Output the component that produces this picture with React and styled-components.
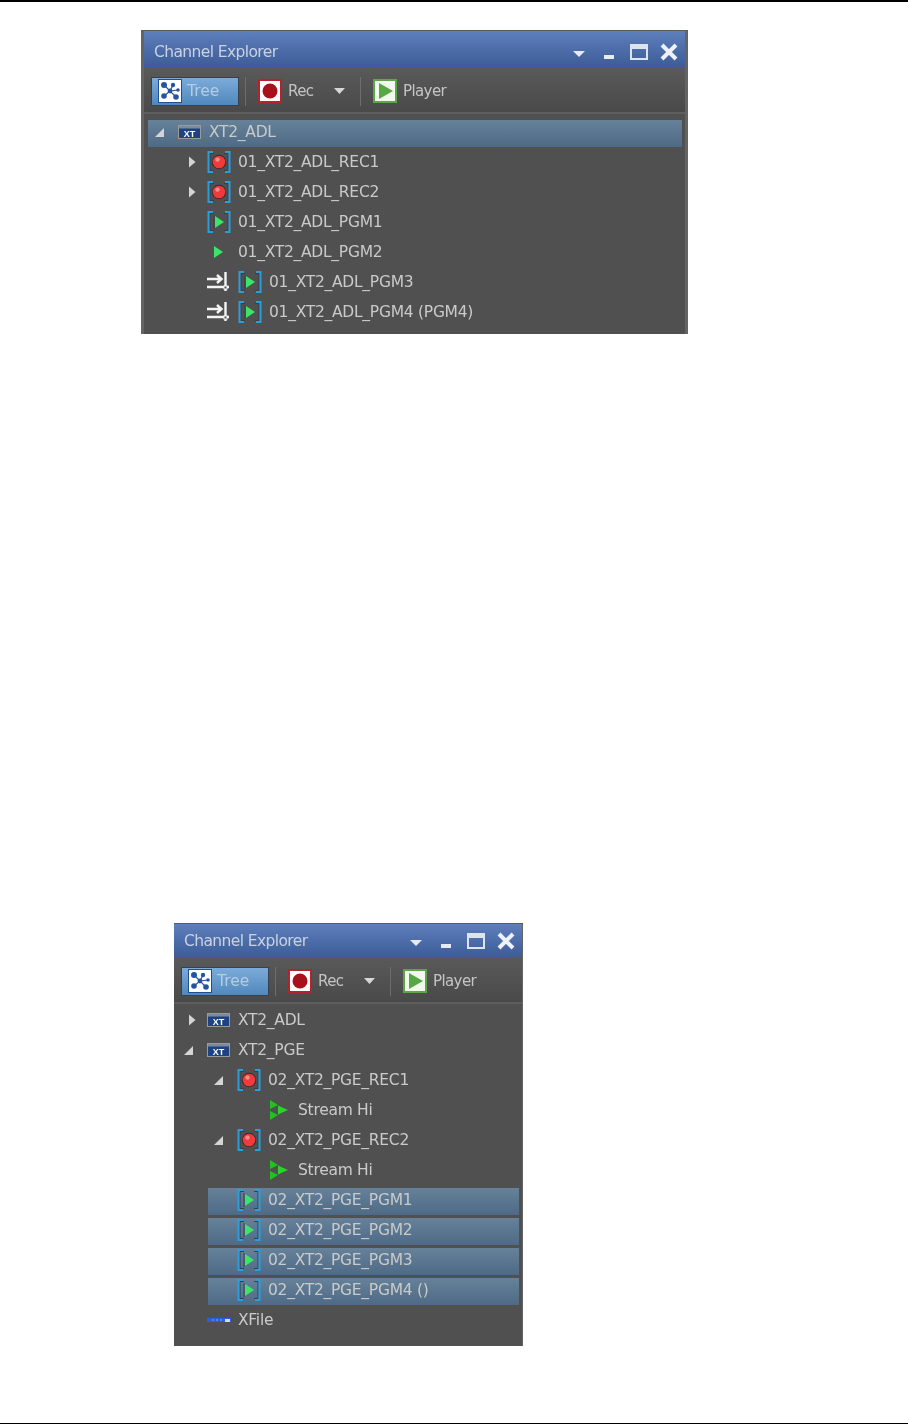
import React from "react";
import styled, { createGlobalStyle } from "styled-components";

const UI_FONT = `"DejaVu Sans", "Liberation Sans", sans-serif`;

const Global = createGlobalStyle`
  html, body { margin: 0; padding: 0; background: #fff; }
  body { font-family: ${UI_FONT}; }
`;

const Page = styled.div`
  display: flex;
  flex-direction: column;
  align-items: flex-start;
  min-height: 100vh;
  box-sizing: border-box;
  border-top: 2px solid #000;
  border-bottom: 1px solid #000;
`;

const Panel = styled.section`
  box-sizing: border-box;
  width: ${(p) => p.$width}px;
  margin: ${(p) => p.$top}px 0 0 ${(p) => p.$left}px;
  padding: 0 ${(p) => (p.$wide ? 3 : 1)}px 0 ${(p) => (p.$wide ? 3 : 0)}px;
  background: #646464;
  border-top: 1px solid #5c5c5c;
  filter: blur(0.45px);
`;

const TitleBar = styled.header`
  display: flex;
  align-items: center;
  justify-content: space-between;
  height: ${(p) => p.$height}px;
  padding: ${(p) => p.$pushDown}px 1px 0 10px;
  box-sizing: border-box;
  background: linear-gradient(#5d7fbc, #3d5c98);
`;

const Title = styled.h2`
  margin: 0;
  font-size: 15.5px;
  font-weight: 400;
  letter-spacing: -0.6px;
  color: #c9d2e2;
`;

const WindowButtons = styled.div`
  display: flex;
  align-items: center;
`;

const WindowButton = styled.svg`
  display: block;
  width: 30px;
  height: 18px;
`;

const Toolbar = styled.div`
  display: flex;
  align-items: center;
  height: 47px;
  padding: 3px 0 0 7px;
  box-sizing: border-box;
  background: linear-gradient(#5a5a5a, #494949);
  border-bottom: 2px solid #5e5e5e;
`;

const TreeButton = styled.button`
  display: flex;
  align-items: center;
  box-sizing: border-box;
  width: 88px;
  height: 29px;
  padding: 0 0 0 6px;
  gap: 5px;
  border: 1px solid #38424c;
  background: linear-gradient(#7cabd9, #5088bd);
  color: #b3cde4;
  font: 400 15.5px ${UI_FONT};
  letter-spacing: 0;
`;

const ToolDivider = styled.span`
  width: 1px;
  height: 29px;
  margin: 0 ${(p) => p.$after}px 0 ${(p) => p.$before}px;
  background: #6e6e6e;
`;

const ToolLabel = styled.span`
  margin-left: 6px;
  min-width: ${(p) => p.$min || 0}px;
  font-size: 15px;
  letter-spacing: -0.6px;
  color: #c4c4c4;
`;

const ToolCaret = styled.svg`
  display: block;
  width: 11px;
  height: 6px;
  margin-left: 19px;
`;

const Tree = styled.div`
  display: flex;
  flex-direction: column;
  gap: 3px;
  padding: ${(p) => p.$top}px 3px ${(p) => p.$bottom}px 0;
  background: #505050;
`;

const Row = styled.div`
  display: flex;
  align-items: center;
  height: 27px;
  margin-left: ${(p) => p.$indent}px;
  padding-left: ${(p) => p.$pad || 0}px;
  padding-bottom: 3px;
  box-sizing: border-box;
  background: ${(p) => (p.$selected ? "linear-gradient(#668199, #4e6a86)" : "none")};
`;

const ExpanderSlot = styled.span`
  display: flex;
  align-items: center;
  justify-content: center;
  flex: none;
  width: 30px;
  & > svg {
    margin-right: ${(p) => (p.$open ? 8 : 1)}px;
  }
`;

const IconSlot = styled.span`
  display: flex;
  align-items: center;
  flex: none;
  width: 31px;
`;

const Label = styled.span`
  font-size: 15.5px;
  letter-spacing: -0.27px;
  white-space: nowrap;
  color: #cacaca;
`;

const Collapsed = () => (
  <svg width="8" height="12" viewBox="0 0 8 12">
    <path d="M1 0.5 L7.5 6 L1 11.5 Z" fill="#d4d4d4" />
  </svg>
);

const Expanded = () => (
  <svg width="9" height="9" viewBox="0 0 9 9">
    <path d="M0 9 L9 9 L9 0 Z" fill="#d4d4d4" />
  </svg>
);

const XtIcon = () => (
  <svg width="23" height="14" viewBox="0 0 23 14">
    <rect x="0.5" y="0.5" width="22" height="13" fill="#1d4384" stroke="#9a9a9a" />
    <rect x="1" y="1" width="21" height="2.5" fill="#7c8aa0" />
    <text x="11.5" y="12" textAnchor="middle" fontFamily="Liberation Sans" fontWeight="700" fontSize="9" fill="#fff">
      XT
    </text>
  </svg>
);

const Brackets = ({ children }) => (
  <svg width="24" height="22" viewBox="0 0 24 22">
    <path d="M7 2.5 H3 V19.5 H7 M17 2.5 H21 V19.5 H17" fill="none" stroke="#3a3f44" strokeWidth="1" />
    <path d="M6 1 H1.5 V21 H6 M18 1 H22.5 V21 H18" fill="none" stroke="#2c9ddb" strokeWidth="2" />
    {children}
  </svg>
);

const RecordBall = () => (
  <>
    <circle cx="12" cy="11" r="7.2" fill="#33292a" />
    <circle cx="12" cy="11" r="6.3" fill="#f03a3c" />
    <circle cx="10.5" cy="8.6" r="2.2" fill="#ff8a8a" />
  </>
);

const PlayMark = () => <path d="M8 5 L17 11 L8 17 Z" fill="#3be56a" />;

const RecordIcon = () => (
  <Brackets>
    <RecordBall />
  </Brackets>
);

const ProgramIcon = () => (
  <Brackets>
    <path d="M7 4 V18" stroke="#3a3f44" strokeWidth="1" />
    <PlayMark />
  </Brackets>
);

const PlayIcon = () => (
  <svg width="24" height="22" viewBox="1 0 24 22">
    <PlayMark />
  </svg>
);

const PinIcon = () => (
  <svg width="24" height="20" viewBox="0 0 24 20">
    <path d="M0 7 H14 M10 3 L14.5 7 L10 11 M0 15 H22 M18.5 0 V19" fill="none" stroke="#f4f4f4" strokeWidth="2.4" />
    <rect x="17" y="14" width="3" height="3" fill="#505050" stroke="#f4f4f4" />
  </svg>
);

const StreamIcon = () => (
  <svg width="23" height="20" viewBox="-2 0 23 20">
    <path d="M1 0 L9 5 L1 9 Z M1 11 L9 15 L1 20 Z" fill="#1fc31f" />
    <path d="M9 5.5 L19 10 L9 14.5 Z" fill="#2bd42b" />
  </svg>
);

const FileIcon = () => (
  <svg width="24" height="6" viewBox="0 0 24 6">
    <rect x="0" y="1" width="24" height="4" fill="#2b5fe0" />
    <path d="M5 3 H7 M9 3 H11 M13 3 H15" stroke="#7fa3f2" strokeWidth="1" />
    <rect x="18" y="2" width="5" height="3" fill="#d8d8e4" />
  </svg>
);

const TreeGlyph = () => (
  <svg width="24" height="24" viewBox="0 0 24 24">
    <rect x="0.5" y="0.5" width="23" height="23" fill="#fff" stroke="#1f4e96" />
    <g fill="#23559f">
      <circle cx="6" cy="6" r="3" />
      <circle cx="15" cy="6" r="2.2" />
      <circle cx="6" cy="17" r="2.8" />
      <circle cx="12" cy="12" r="2.4" />
      <circle cx="18" cy="18" r="2.8" />
      <circle cx="20" cy="11" r="1.8" />
    </g>
    <path d="M6 6 L12 12 L15 6 M6 17 L12 12 L18 18 M12 12 L20 11" stroke="#23559f" strokeWidth="1.2" fill="none" />
  </svg>
);

const RecToolIcon = () => (
  <svg width="24" height="24" viewBox="0 0 24 24">
    <rect x="1" y="1" width="22" height="22" fill="#fff" stroke="#b4232c" strokeWidth="2" />
    <circle cx="12" cy="12" r="7.5" fill="#a8101c" />
  </svg>
);

const PlayerToolIcon = () => (
  <svg width="24" height="24" viewBox="0 0 24 24">
    <rect x="1" y="1" width="22" height="22" fill="#f3f8ee" stroke="#5ca548" strokeWidth="2" />
    <path d="M6 4 L20 12 L6 20 Z" fill="#56a844" />
  </svg>
);

const WindowControls = () => (
  <WindowButtons>
    <WindowButton viewBox="0 0 30 18">
      <path d="M9 8 H21 L15 14 Z" fill="#e6ebf4" />
    </WindowButton>
    <WindowButton viewBox="0 0 30 18">
      <rect x="10" y="12" width="10" height="4" fill="#e6ebf4" />
    </WindowButton>
    <WindowButton viewBox="0 0 30 18">
      <rect x="7" y="2" width="16" height="14" fill="none" stroke="#dde4f0" strokeWidth="2" />
      <rect x="7" y="2" width="16" height="4" fill="#dde4f0" />
    </WindowButton>
    <WindowButton viewBox="0 0 30 18">
      <path d="M8 2 L22 16 M22 2 L8 16" stroke="#eef1f7" strokeWidth="4" />
    </WindowButton>
  </WindowButtons>
);

const ToolStrip = () => (
  <Toolbar>
    <TreeButton>
      <TreeGlyph />
      Tree
    </TreeButton>
    <ToolDivider $before={6} $after={12} />
    <RecToolIcon />
    <ToolLabel $min={27}>Rec</ToolLabel>
    <ToolCaret viewBox="0 0 11 6">
      <path d="M0 0 H11 L5.5 6 Z" fill="#d6d6d6" />
    </ToolCaret>
    <ToolDivider $before={15} $after={12} />
    <PlayerToolIcon />
    <ToolLabel>Player</ToolLabel>
  </Toolbar>
);

const TreeRow = ({ indent, pad, selected, expander, icons, label }) => (
  <Row $indent={indent} $pad={pad} $selected={selected}>
    {expander && (
      <ExpanderSlot $open={expander === "open"}>{expander === "open" ? <Expanded /> : <Collapsed />}</ExpanderSlot>
    )}
    {icons.map((Icon, i) => (
      <IconSlot key={i}>
        <Icon />
      </IconSlot>
    ))}
    <Label>{label}</Label>
  </Row>
);

const adlRows = [
  { indent: 4, selected: true, expander: "open", icons: [XtIcon], label: "XT2_ADL" },
  { indent: 33, expander: "closed", icons: [RecordIcon], label: "01_XT2_ADL_REC1" },
  { indent: 33, expander: "closed", icons: [RecordIcon], label: "01_XT2_ADL_REC2" },
  { indent: 63, icons: [ProgramIcon], label: "01_XT2_ADL_PGM1" },
  { indent: 63, icons: [PlayIcon], label: "01_XT2_ADL_PGM2" },
  { indent: 63, icons: [PinIcon, ProgramIcon], label: "01_XT2_ADL_PGM3" },
  { indent: 63, icons: [PinIcon, ProgramIcon], label: "01_XT2_ADL_PGM4 (PGM4)" },
];

const pgeRows = [
  { indent: 3, expander: "closed", icons: [XtIcon], label: "XT2_ADL" },
  { indent: 3, expander: "open", icons: [XtIcon], label: "XT2_PGE" },
  { indent: 33, expander: "open", icons: [RecordIcon], label: "02_XT2_PGE_REC1" },
  { indent: 93, icons: [StreamIcon], label: "Stream Hi" },
  { indent: 33, expander: "open", icons: [RecordIcon], label: "02_XT2_PGE_REC2" },
  { indent: 93, icons: [StreamIcon], label: "Stream Hi" },
  { indent: 34, pad: 29, selected: true, icons: [ProgramIcon], label: "02_XT2_PGE_PGM1" },
  { indent: 34, pad: 29, selected: true, icons: [ProgramIcon], label: "02_XT2_PGE_PGM2" },
  { indent: 34, pad: 29, selected: true, icons: [ProgramIcon], label: "02_XT2_PGE_PGM3" },
  { indent: 34, pad: 29, selected: true, icons: [ProgramIcon], label: "02_XT2_PGE_PGM4 ()" },
  { indent: 33, icons: [FileIcon], label: "XFile" },
];

const ChannelExplorer = ({ left, top, width, wide, titleHeight, titlePush, treeTop, treeBottom, rows }) => (
  <Panel $left={left} $top={top} $width={width} $wide={wide}>
    <TitleBar $height={titleHeight} $pushDown={titlePush}>
      <Title>Channel Explorer</Title>
      <WindowControls />
    </TitleBar>
    <ToolStrip />
    <Tree $top={treeTop} $bottom={treeBottom}>
      {rows.map((row, i) => (
        <TreeRow key={i} {...row} />
      ))}
    </Tree>
  </Panel>
);

export default function App() {
  return (
    <Page>
      <Global />
      <ChannelExplorer left={141} top={28} width={547} wide titleHeight={36} titlePush={5} treeTop={6} treeBottom={7} rows={adlRows} />
      <ChannelExplorer left={174} top={589} width={349} titleHeight={33} titlePush={0} treeTop={4} treeBottom={11} rows={pgeRows} />
    </Page>
  );
}
